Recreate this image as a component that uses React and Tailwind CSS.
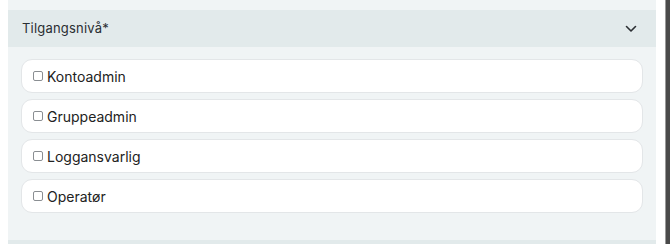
import React from "react";

const roles = ["Kontoadmin", "Gruppeadmin", "Loggansvarlig", "Operatør"];

function Chevron() {
  return (
    <svg width="12" height="8" viewBox="0 0 12 8" fill="none" className="block">
      <path d="M1.5 1.5 L6 6 L10.5 1.5" stroke="#2b2f33" strokeWidth="1.6" strokeLinecap="round" strokeLinejoin="round" />
    </svg>
  );
}

export default function App() {
  return (
    <div
      className="flex w-[670px] h-[244px] bg-white overflow-hidden"
      style={{ fontFamily: "Inter, 'Noto Sans', sans-serif" }}
    >
      <div className="w-[8px] shrink-0" />
      <div className="w-[648px] shrink-0 flex flex-col bg-[#f0f4f5]">
        <div className="h-[10px] shrink-0" />
        <div className="h-[37px] shrink-0 bg-[#e2eaeb] flex items-center justify-between pl-[14px] pr-[19px]">
          <span className="text-[13px] font-normal tracking-[0.015em] text-[#2a2e32]">Tilgangsnivå*</span>
          <Chevron />
        </div>
        <div className="flex flex-col gap-[6px] px-[13px] pt-[12px] flex-1">
          {roles.map((r) => (
            <label
              key={r}
              className="h-[34px] bg-white border border-[#e3e6e8] rounded-[11px] flex items-center pl-[11px] gap-[4px] text-[14px] text-[#222]"
            >
              <input
                type="checkbox"
                className="appearance-none w-[10px] h-[10px] border border-[#8a8e92] rounded-[2px] bg-white m-0"
              />
              <span>{r}</span>
            </label>
          ))}
        </div>
        <div className="h-[4px] shrink-0 bg-[#e2eaeb]" />
      </div>
      <div className="w-[9px] shrink-0 bg-white" />
      <div className="w-[1px] shrink-0 bg-[#9a9a9a]" />
      <div className="flex-1 bg-[#4a4a4a]" />
    </div>
  );
}
